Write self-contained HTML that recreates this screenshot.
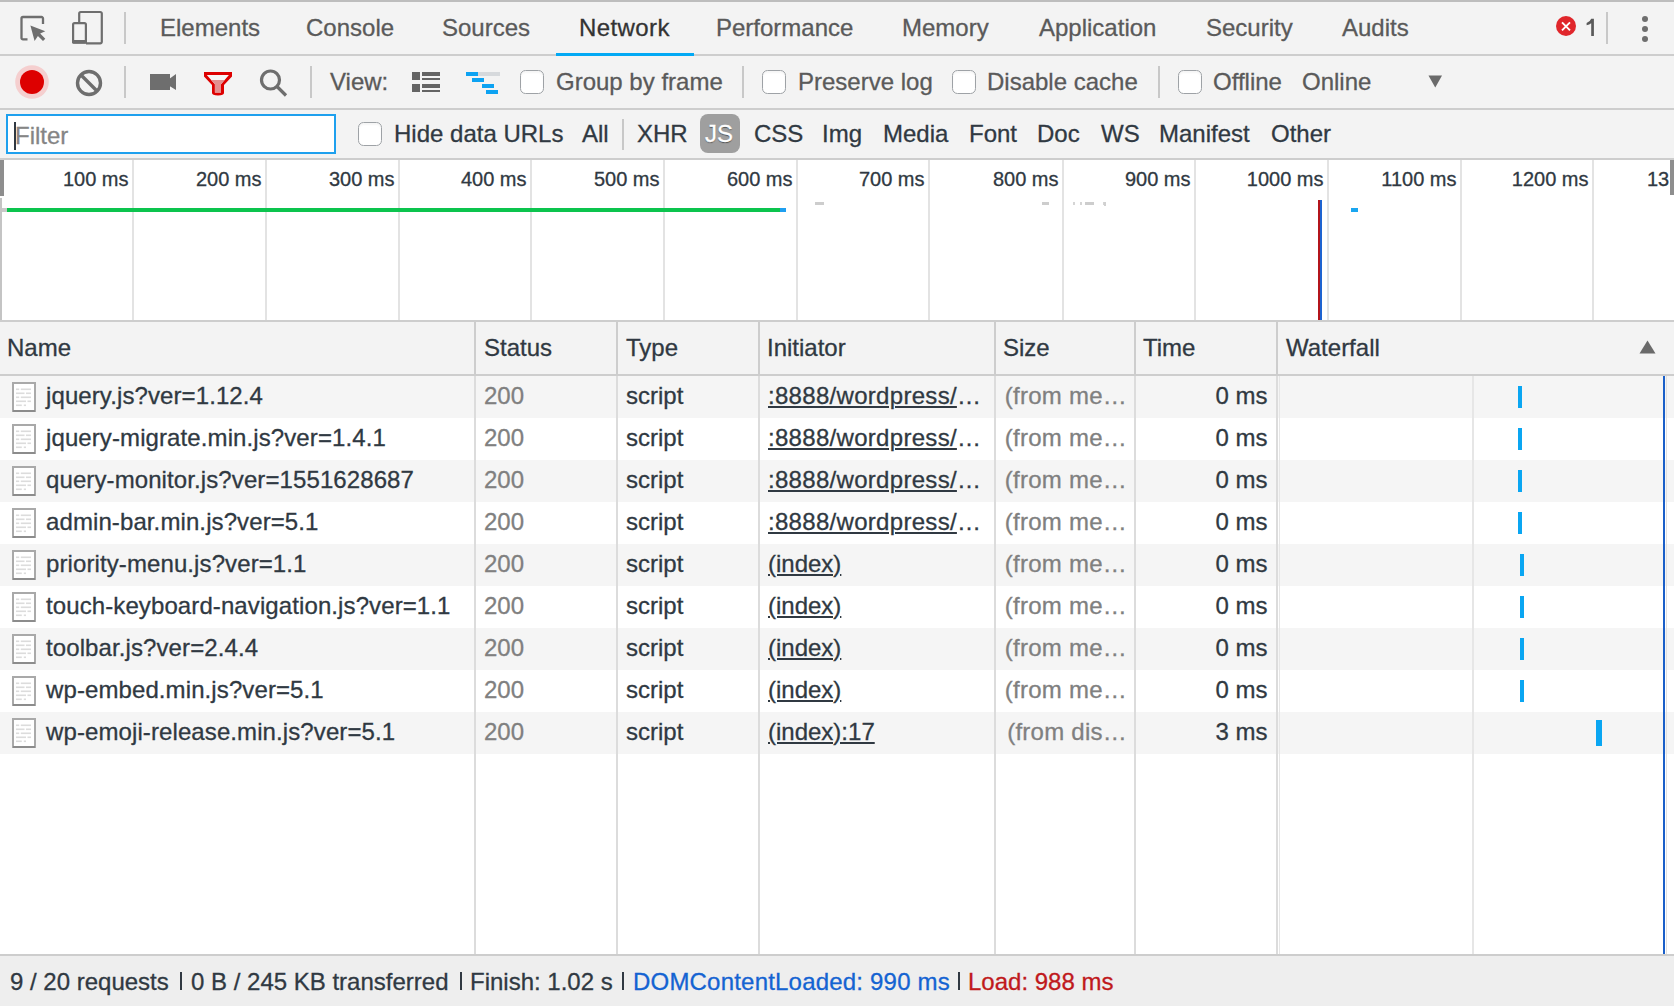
<!DOCTYPE html>
<html><head><meta charset="utf-8"><style>
html,body{margin:0;padding:0;width:1674px;height:1006px;overflow:hidden;background:#fff;}
body{position:relative;font-family:"Liberation Sans", sans-serif;font-size:24px;}
.t{position:absolute;white-space:pre;line-height:28px;font-size:24px;-webkit-text-stroke:0.3px currentColor;}
.r{position:absolute;}
svg{position:absolute;overflow:visible;}
</style></head><body>
<div class="r" style="left:0px;top:0px;width:1674px;height:160px;background:#f3f3f3;"></div>
<div class="r" style="left:0px;top:0px;width:1674px;height:2px;background:#bdbdbd;"></div>
<div class="r" style="left:0px;top:54px;width:1674px;height:2px;background:#cdcdcd;"></div>
<div class="r" style="left:0px;top:108px;width:1674px;height:2px;background:#cdcdcd;"></div>
<div class="r" style="left:0px;top:158px;width:1674px;height:2px;background:#cdcdcd;"></div>
<div class="r" style="left:0px;top:160px;width:1674px;height:160px;background:#ffffff;"></div>
<div class="r" style="left:0px;top:320px;width:1674px;height:2px;background:#cdcdcd;"></div>
<div class="r" style="left:0px;top:322px;width:1674px;height:52px;background:#f3f3f3;"></div>
<div class="r" style="left:0px;top:374px;width:1674px;height:2px;background:#cdcdcd;"></div>
<div class="r" style="left:0px;top:376px;width:1674px;height:578px;background:#ffffff;"></div>
<div class="r" style="left:0px;top:954px;width:1674px;height:2px;background:#cdcdcd;"></div>
<div class="r" style="left:0px;top:956px;width:1674px;height:50px;background:#eeeeee;"></div>
<svg style="left:18px;top:14px" width="32" height="32" viewBox="0 0 32 32"><path d="M9.5 25.4 H5 a1.5 1.5 0 0 1 -1.5 -1.5 V4.5 a1.5 1.5 0 0 1 1.5 -1.5 H23.5 a1.5 1.5 0 0 1 1.5 1.5 V10" fill="none" stroke="#6e6e6e" stroke-width="2.3"/><path d="M12.4 11.6 L27.3 17.2 L22.2 19.6 L27.3 24.7 L25 27 L19.9 21.9 L16.6 27.1 Z" fill="#6e6e6e"/></svg>
<svg style="left:70px;top:10px" width="36" height="36" viewBox="0 0 36 36"><path d="M9.2 12 V3.5 a1.5 1.5 0 0 1 1.5 -1.5 H30.3 a1.5 1.5 0 0 1 1.5 1.5 V31.8 a1.5 1.5 0 0 1 -1.5 1.5 H16" fill="none" stroke="#6e6e6e" stroke-width="2.2"/><rect x="3.1" y="13.1" width="12.8" height="19.6" rx="1.5" fill="none" stroke="#6e6e6e" stroke-width="2.2"/><rect x="2" y="30" width="15" height="3.5" rx="1" fill="#6e6e6e"/></svg>
<div class="r" style="left:124px;top:12px;width:2px;height:32px;background:#c8c8c8;"></div>
<div class="t" style="left:160px;top:14px;color:#5a5a5a;">Elements</div>
<div class="t" style="left:306px;top:14px;color:#5a5a5a;">Console</div>
<div class="t" style="left:442px;top:14px;color:#5a5a5a;">Sources</div>
<div class="t" style="left:579px;top:14px;color:#333333;letter-spacing:0.4px;">Network</div>
<div class="t" style="left:716px;top:14px;color:#5a5a5a;">Performance</div>
<div class="t" style="left:902px;top:14px;color:#5a5a5a;">Memory</div>
<div class="t" style="left:1039px;top:14px;color:#5a5a5a;">Application</div>
<div class="t" style="left:1206px;top:14px;color:#5a5a5a;">Security</div>
<div class="t" style="left:1342px;top:14px;color:#5a5a5a;">Audits</div>
<div class="r" style="left:556px;top:53px;width:138px;height:3px;background:#03a9f4;"></div>
<svg style="left:1554px;top:14px" width="24" height="24" viewBox="0 0 24 24"><circle cx="12" cy="12" r="10" fill="#e0262b"/><path d="M8 8.3 L16 16.3 M16 8.3 L8 16.3" stroke="#fff" stroke-width="1.9"/></svg>
<svg style="left:1584px;top:16px" width="14" height="22" viewBox="0 0 14 22"><path d="M7.2 2.8 H9.9 V20 H7.2 V7.2 Q5.5 8.6 2.6 9.3 V6.9 Q6 6 7.2 2.8 Z" fill="#5a5a5a"/></svg>
<div class="r" style="left:1606px;top:12px;width:2px;height:32px;background:#c8c8c8;"></div>
<div class="r" style="left:1642px;top:16px;width:6px;height:6px;background:#6e6e6e;border-radius:50%;"></div>
<div class="r" style="left:1642px;top:26px;width:6px;height:6px;background:#6e6e6e;border-radius:50%;"></div>
<div class="r" style="left:1642px;top:36px;width:6px;height:6px;background:#6e6e6e;border-radius:50%;"></div>
<svg style="left:14px;top:64px" width="36" height="36" viewBox="0 0 36 36"><circle cx="18" cy="18" r="16.8" fill="#f5cfcf"/><circle cx="18" cy="18" r="12" fill="#dd0000"/></svg>
<svg style="left:74px;top:68px" width="30" height="30" viewBox="0 0 30 30"><circle cx="15" cy="15" r="11.5" fill="none" stroke="#6e6e6e" stroke-width="3.4"/><path d="M7 7 L23 23" stroke="#6e6e6e" stroke-width="3.4"/></svg>
<div class="r" style="left:124px;top:66px;width:2px;height:32px;background:#c8c8c8;"></div>
<svg style="left:148px;top:72px" width="32" height="20" viewBox="0 0 32 20"><rect x="2" y="2" width="20" height="16" fill="#6e6e6e"/><path d="M21.5 6.7 L28 2 V18 L21.5 13.9 Z" fill="#6e6e6e"/></svg>
<svg style="left:200px;top:68px" width="36" height="32" viewBox="0 0 36 32"><path d="M4 4 H32 V8.6 L24 17 V25 Q24 27.4 18 27.4 Q12 27.4 12 25 V17 L4 8.6 Z" fill="#dd0000"/><path d="M6.8 7 H28.9 L21 16.3 V24.6 H14.9 V16.3 Z" fill="#f6f6f6"/><path d="M11.2 12.1 H24.6 L21 16.3 V24.6 H14.9 V16.3 Z" fill="#e38f8f"/></svg>
<svg style="left:256px;top:66px" width="36" height="36" viewBox="0 0 36 36"><circle cx="14.5" cy="14" r="9" fill="none" stroke="#6e6e6e" stroke-width="3.2"/><path d="M21 20.5 L30 29.5" stroke="#6e6e6e" stroke-width="3.2"/></svg>
<div class="r" style="left:310px;top:66px;width:2px;height:32px;background:#c8c8c8;"></div>
<div class="t" style="left:330px;top:68px;color:#5a5a5a;">View:</div>
<div class="r" style="left:412px;top:72px;width:8px;height:8px;background:#646464;"></div>
<div class="r" style="left:412px;top:84px;width:8px;height:8px;background:#646464;"></div>
<div class="r" style="left:422px;top:72px;width:18px;height:4px;background:#646464;"></div>
<div class="r" style="left:422px;top:78px;width:18px;height:2px;background:#646464;"></div>
<div class="r" style="left:422px;top:84px;width:18px;height:4px;background:#646464;"></div>
<div class="r" style="left:422px;top:90px;width:18px;height:2px;background:#646464;"></div>
<div class="r" style="left:466px;top:72px;width:12px;height:4px;background:#0ca2f2;"></div>
<div class="r" style="left:478px;top:72px;width:22px;height:4px;background:#d6d9dc;"></div>
<div class="r" style="left:472px;top:78px;width:12px;height:4px;background:#0ca2f2;"></div>
<div class="r" style="left:482px;top:84px;width:12px;height:4px;background:#0ca2f2;"></div>
<div class="r" style="left:486px;top:90px;width:12px;height:4px;background:#0ca2f2;"></div>
<div class="r" style="left:520px;top:70px;width:24px;height:24px;background:#ffffff;box-sizing:border-box;border:1.5px solid #9ea2a6;border-radius:5.5px;box-shadow:inset 0 2px 2px rgba(0,0,0,0.04);"></div>
<div class="t" style="left:556px;top:68px;color:#5a5a5a;">Group by frame</div>
<div class="r" style="left:742px;top:66px;width:2px;height:32px;background:#c8c8c8;"></div>
<div class="r" style="left:762px;top:70px;width:24px;height:24px;background:#ffffff;box-sizing:border-box;border:1.5px solid #9ea2a6;border-radius:5.5px;box-shadow:inset 0 2px 2px rgba(0,0,0,0.04);"></div>
<div class="t" style="left:798px;top:68px;color:#5a5a5a;">Preserve log</div>
<div class="r" style="left:952px;top:70px;width:24px;height:24px;background:#ffffff;box-sizing:border-box;border:1.5px solid #9ea2a6;border-radius:5.5px;box-shadow:inset 0 2px 2px rgba(0,0,0,0.04);"></div>
<div class="t" style="left:987px;top:68px;color:#5a5a5a;">Disable cache</div>
<div class="r" style="left:1158px;top:66px;width:2px;height:32px;background:#c8c8c8;"></div>
<div class="r" style="left:1178px;top:70px;width:24px;height:24px;background:#ffffff;box-sizing:border-box;border:1.5px solid #9ea2a6;border-radius:5.5px;box-shadow:inset 0 2px 2px rgba(0,0,0,0.04);"></div>
<div class="t" style="left:1213px;top:68px;color:#5a5a5a;">Offline</div>
<div class="t" style="left:1302px;top:68px;color:#5a5a5a;">Online</div>
<svg style="left:1428px;top:75px" width="15" height="13" viewBox="0 0 15 13"><path d="M0.5 0.5 H14 L7.25 12.5 Z" fill="#6a6a6a"/></svg>
<div class="r" style="left:6px;top:114px;width:330px;height:40px;background:#ffffff;box-sizing:border-box;border:2px solid #1ea0ee;"></div>
<div class="r" style="left:14px;top:122px;width:2px;height:28px;background:#303942;"></div>
<div class="t" style="left:15px;top:121.5px;color:#858585;">Filter</div>
<div class="r" style="left:358px;top:122px;width:24px;height:24px;background:#ffffff;box-sizing:border-box;border:1.5px solid #9ea2a6;border-radius:5.5px;box-shadow:inset 0 2px 2px rgba(0,0,0,0.04);"></div>
<div class="t" style="left:394px;top:120px;color:#303942;">Hide data URLs</div>
<div class="t" style="left:582px;top:120px;color:#303942;">All</div>
<div class="t" style="left:637px;top:120px;color:#303942;">XHR</div>
<div class="t" style="left:754px;top:120px;color:#303942;">CSS</div>
<div class="t" style="left:822px;top:120px;color:#303942;">Img</div>
<div class="t" style="left:883px;top:120px;color:#303942;">Media</div>
<div class="t" style="left:969px;top:120px;color:#303942;">Font</div>
<div class="t" style="left:1037px;top:120px;color:#303942;">Doc</div>
<div class="t" style="left:1101px;top:120px;color:#303942;">WS</div>
<div class="t" style="left:1159px;top:120px;color:#303942;">Manifest</div>
<div class="t" style="left:1271px;top:120px;color:#303942;">Other</div>
<div class="r" style="left:622px;top:119px;width:2px;height:31px;background:#c8c8c8;"></div>
<div class="r" style="left:700px;top:114px;width:40px;height:39px;background:#9f9f9f;border-radius:8px;"></div>
<div class="t" style="left:705px;top:120px;color:#ffffff;text-shadow:0 1px 1px rgba(0,0,0,0.5);">JS</div>
<div class="r" style="left:132px;top:160px;width:2px;height:160px;background:#e3e3e3;"></div>
<div class="r" style="left:265px;top:160px;width:2px;height:160px;background:#e3e3e3;"></div>
<div class="r" style="left:398px;top:160px;width:2px;height:160px;background:#e3e3e3;"></div>
<div class="r" style="left:530px;top:160px;width:2px;height:160px;background:#e3e3e3;"></div>
<div class="r" style="left:663px;top:160px;width:2px;height:160px;background:#e3e3e3;"></div>
<div class="r" style="left:796px;top:160px;width:2px;height:160px;background:#e3e3e3;"></div>
<div class="r" style="left:928px;top:160px;width:2px;height:160px;background:#e3e3e3;"></div>
<div class="r" style="left:1062px;top:160px;width:2px;height:160px;background:#e3e3e3;"></div>
<div class="r" style="left:1194px;top:160px;width:2px;height:160px;background:#e3e3e3;"></div>
<div class="r" style="left:1327px;top:160px;width:2px;height:160px;background:#e3e3e3;"></div>
<div class="r" style="left:1460px;top:160px;width:2px;height:160px;background:#e3e3e3;"></div>
<div class="r" style="left:1592px;top:160px;width:2px;height:160px;background:#e3e3e3;"></div>
<div class="t" style="right:1545.5px;top:165px;color:#303942;font-size:20px">100 ms</div>
<div class="t" style="right:1412.5px;top:165px;color:#303942;font-size:20px">200 ms</div>
<div class="t" style="right:1279.5px;top:165px;color:#303942;font-size:20px">300 ms</div>
<div class="t" style="right:1147.5px;top:165px;color:#303942;font-size:20px">400 ms</div>
<div class="t" style="right:1014.5px;top:165px;color:#303942;font-size:20px">500 ms</div>
<div class="t" style="right:881.5px;top:165px;color:#303942;font-size:20px">600 ms</div>
<div class="t" style="right:749.5px;top:165px;color:#303942;font-size:20px">700 ms</div>
<div class="t" style="right:615.5px;top:165px;color:#303942;font-size:20px">800 ms</div>
<div class="t" style="right:483.5px;top:165px;color:#303942;font-size:20px">900 ms</div>
<div class="t" style="right:350.5px;top:165px;color:#303942;font-size:20px">1000 ms</div>
<div class="t" style="right:217.5px;top:165px;color:#303942;font-size:20px">1100 ms</div>
<div class="t" style="right:85.5px;top:165px;color:#303942;font-size:20px">1200 ms</div>
<div class="t" style="left:1647px;top:165px;color:#303942;font-size:20px">13</div>
<div class="r" style="left:0px;top:160px;width:4px;height:36px;background:#8e8e8e;"></div>
<div class="r" style="left:0px;top:198px;width:2px;height:122px;background:#c4c4c4;"></div>
<div class="r" style="left:1670px;top:160px;width:4px;height:35px;background:#8e8e8e;"></div>
<div class="r" style="left:2px;top:208px;width:5px;height:4px;background:#c9c9c9;"></div>
<div class="r" style="left:7px;top:208px;width:773px;height:4px;background:#0cc44e;"></div>
<div class="r" style="left:780px;top:208px;width:6px;height:4px;background:#1f9ff0;"></div>
<div class="r" style="left:815px;top:202px;width:9px;height:3px;background:#cdcdcd;"></div>
<div class="r" style="left:1042px;top:202px;width:7px;height:3px;background:#cdcdcd;"></div>
<div class="r" style="left:1073px;top:202px;width:2px;height:3px;background:#d5d5d5;"></div>
<div class="r" style="left:1080px;top:202px;width:2px;height:3px;background:#d5d5d5;"></div>
<div class="r" style="left:1085px;top:202px;width:9px;height:3px;background:#cdcdcd;"></div>
<div class="r" style="left:1103px;top:202px;width:2px;height:3px;background:#d5d5d5;"></div>
<div class="r" style="left:1104px;top:202px;width:2px;height:4px;background:#d0d0d0;"></div>
<div class="r" style="left:1318px;top:200px;width:2px;height:120px;background:#b3141b;"></div>
<div class="r" style="left:1320px;top:200px;width:2px;height:120px;background:#1e63d0;"></div>
<div class="r" style="left:1351px;top:208px;width:7px;height:4px;background:#1aa6f0;"></div>
<div class="t" style="left:7px;top:334px;color:#303942;">Name</div>
<div class="t" style="left:484px;top:334px;color:#303942;">Status</div>
<div class="t" style="left:626px;top:334px;color:#303942;">Type</div>
<div class="t" style="left:767px;top:334px;color:#303942;">Initiator</div>
<div class="t" style="left:1003px;top:334px;color:#303942;">Size</div>
<div class="t" style="left:1143px;top:334px;color:#303942;">Time</div>
<div class="t" style="left:1286px;top:334px;color:#303942;">Waterfall</div>
<svg style="left:1639px;top:340px" width="18" height="14" viewBox="0 0 18 14"><path d="M0.5 13.5 L8.5 0.5 L16.5 13.5 Z" fill="#6a6a6a"/></svg>
<div class="r" style="left:474px;top:322px;width:2px;height:52px;background:#cdcdcd;"></div>
<div class="r" style="left:616px;top:322px;width:2px;height:52px;background:#cdcdcd;"></div>
<div class="r" style="left:758px;top:322px;width:2px;height:52px;background:#cdcdcd;"></div>
<div class="r" style="left:994px;top:322px;width:2px;height:52px;background:#cdcdcd;"></div>
<div class="r" style="left:1134px;top:322px;width:2px;height:52px;background:#cdcdcd;"></div>
<div class="r" style="left:1276px;top:322px;width:2px;height:52px;background:#cdcdcd;"></div>
<div class="r" style="left:0px;top:376px;width:1674px;height:42px;background:#f5f5f5;"></div>
<svg style="left:12px;top:382px" width="24" height="30" viewBox="0 0 24 30"><rect x="1" y="1" width="22" height="28" fill="#fff" stroke="#a9a9a9" stroke-width="2"/><path d="M1 29 H23" stroke="#8c8c8c" stroke-width="2"/><g fill="#dcdcdc"><rect x="4" y="6.5" width="3.2" height="1.6"/><rect x="8.8" y="6.5" width="10.2" height="1.6"/><rect x="4" y="10.5" width="8.5" height="1.6"/><rect x="14" y="10.5" width="5" height="1.6"/><rect x="4" y="14.5" width="3.2" height="1.6"/><rect x="8.8" y="14.5" width="10.2" height="1.6"/><rect x="4" y="18.5" width="10" height="1.6"/><rect x="15.5" y="18.5" width="3.5" height="1.6"/><rect x="4" y="22.5" width="5.8" height="1.6"/><rect x="11.8" y="22.5" width="2.2" height="1.6"/></g></svg>
<div class="t" style="left:46px;top:382px;color:#303942;letter-spacing:0.1px;">jquery.js?ver=1.12.4</div>
<div class="t" style="left:484px;top:382px;color:#808080;">200</div>
<div class="t" style="left:626px;top:382px;color:#303942;">script</div>
<div class="t" style="left:768px;top:382px;color:#303942"><span style="text-decoration:underline;text-decoration-thickness:1.8px;text-underline-offset:1.5px;letter-spacing:0.3px">:8888/wordpress/</span><span style="letter-spacing:-1px">…</span></div>
<div class="t" style="right:547px;top:382px;color:#808080;letter-spacing:0.25px;">(from me…</div>
<div class="t" style="right:406.5px;top:382px;color:#303942;">0 ms</div>
<div class="r" style="left:1518px;top:386px;width:4px;height:22px;background:#0aa6f2;"></div>
<svg style="left:12px;top:424px" width="24" height="30" viewBox="0 0 24 30"><rect x="1" y="1" width="22" height="28" fill="#fff" stroke="#a9a9a9" stroke-width="2"/><path d="M1 29 H23" stroke="#8c8c8c" stroke-width="2"/><g fill="#dcdcdc"><rect x="4" y="6.5" width="3.2" height="1.6"/><rect x="8.8" y="6.5" width="10.2" height="1.6"/><rect x="4" y="10.5" width="8.5" height="1.6"/><rect x="14" y="10.5" width="5" height="1.6"/><rect x="4" y="14.5" width="3.2" height="1.6"/><rect x="8.8" y="14.5" width="10.2" height="1.6"/><rect x="4" y="18.5" width="10" height="1.6"/><rect x="15.5" y="18.5" width="3.5" height="1.6"/><rect x="4" y="22.5" width="5.8" height="1.6"/><rect x="11.8" y="22.5" width="2.2" height="1.6"/></g></svg>
<div class="t" style="left:46px;top:424px;color:#303942;letter-spacing:0.1px;">jquery-migrate.min.js?ver=1.4.1</div>
<div class="t" style="left:484px;top:424px;color:#808080;">200</div>
<div class="t" style="left:626px;top:424px;color:#303942;">script</div>
<div class="t" style="left:768px;top:424px;color:#303942"><span style="text-decoration:underline;text-decoration-thickness:1.8px;text-underline-offset:1.5px;letter-spacing:0.3px">:8888/wordpress/</span><span style="letter-spacing:-1px">…</span></div>
<div class="t" style="right:547px;top:424px;color:#808080;letter-spacing:0.25px;">(from me…</div>
<div class="t" style="right:406.5px;top:424px;color:#303942;">0 ms</div>
<div class="r" style="left:1518px;top:428px;width:4px;height:22px;background:#0aa6f2;"></div>
<div class="r" style="left:0px;top:460px;width:1674px;height:42px;background:#f5f5f5;"></div>
<svg style="left:12px;top:466px" width="24" height="30" viewBox="0 0 24 30"><rect x="1" y="1" width="22" height="28" fill="#fff" stroke="#a9a9a9" stroke-width="2"/><path d="M1 29 H23" stroke="#8c8c8c" stroke-width="2"/><g fill="#dcdcdc"><rect x="4" y="6.5" width="3.2" height="1.6"/><rect x="8.8" y="6.5" width="10.2" height="1.6"/><rect x="4" y="10.5" width="8.5" height="1.6"/><rect x="14" y="10.5" width="5" height="1.6"/><rect x="4" y="14.5" width="3.2" height="1.6"/><rect x="8.8" y="14.5" width="10.2" height="1.6"/><rect x="4" y="18.5" width="10" height="1.6"/><rect x="15.5" y="18.5" width="3.5" height="1.6"/><rect x="4" y="22.5" width="5.8" height="1.6"/><rect x="11.8" y="22.5" width="2.2" height="1.6"/></g></svg>
<div class="t" style="left:46px;top:466px;color:#303942;letter-spacing:0.1px;">query-monitor.js?ver=1551628687</div>
<div class="t" style="left:484px;top:466px;color:#808080;">200</div>
<div class="t" style="left:626px;top:466px;color:#303942;">script</div>
<div class="t" style="left:768px;top:466px;color:#303942"><span style="text-decoration:underline;text-decoration-thickness:1.8px;text-underline-offset:1.5px;letter-spacing:0.3px">:8888/wordpress/</span><span style="letter-spacing:-1px">…</span></div>
<div class="t" style="right:547px;top:466px;color:#808080;letter-spacing:0.25px;">(from me…</div>
<div class="t" style="right:406.5px;top:466px;color:#303942;">0 ms</div>
<div class="r" style="left:1518px;top:470px;width:4px;height:22px;background:#0aa6f2;"></div>
<svg style="left:12px;top:508px" width="24" height="30" viewBox="0 0 24 30"><rect x="1" y="1" width="22" height="28" fill="#fff" stroke="#a9a9a9" stroke-width="2"/><path d="M1 29 H23" stroke="#8c8c8c" stroke-width="2"/><g fill="#dcdcdc"><rect x="4" y="6.5" width="3.2" height="1.6"/><rect x="8.8" y="6.5" width="10.2" height="1.6"/><rect x="4" y="10.5" width="8.5" height="1.6"/><rect x="14" y="10.5" width="5" height="1.6"/><rect x="4" y="14.5" width="3.2" height="1.6"/><rect x="8.8" y="14.5" width="10.2" height="1.6"/><rect x="4" y="18.5" width="10" height="1.6"/><rect x="15.5" y="18.5" width="3.5" height="1.6"/><rect x="4" y="22.5" width="5.8" height="1.6"/><rect x="11.8" y="22.5" width="2.2" height="1.6"/></g></svg>
<div class="t" style="left:46px;top:508px;color:#303942;letter-spacing:0.1px;">admin-bar.min.js?ver=5.1</div>
<div class="t" style="left:484px;top:508px;color:#808080;">200</div>
<div class="t" style="left:626px;top:508px;color:#303942;">script</div>
<div class="t" style="left:768px;top:508px;color:#303942"><span style="text-decoration:underline;text-decoration-thickness:1.8px;text-underline-offset:1.5px;letter-spacing:0.3px">:8888/wordpress/</span><span style="letter-spacing:-1px">…</span></div>
<div class="t" style="right:547px;top:508px;color:#808080;letter-spacing:0.25px;">(from me…</div>
<div class="t" style="right:406.5px;top:508px;color:#303942;">0 ms</div>
<div class="r" style="left:1518px;top:512px;width:4px;height:22px;background:#0aa6f2;"></div>
<div class="r" style="left:0px;top:544px;width:1674px;height:42px;background:#f5f5f5;"></div>
<svg style="left:12px;top:550px" width="24" height="30" viewBox="0 0 24 30"><rect x="1" y="1" width="22" height="28" fill="#fff" stroke="#a9a9a9" stroke-width="2"/><path d="M1 29 H23" stroke="#8c8c8c" stroke-width="2"/><g fill="#dcdcdc"><rect x="4" y="6.5" width="3.2" height="1.6"/><rect x="8.8" y="6.5" width="10.2" height="1.6"/><rect x="4" y="10.5" width="8.5" height="1.6"/><rect x="14" y="10.5" width="5" height="1.6"/><rect x="4" y="14.5" width="3.2" height="1.6"/><rect x="8.8" y="14.5" width="10.2" height="1.6"/><rect x="4" y="18.5" width="10" height="1.6"/><rect x="15.5" y="18.5" width="3.5" height="1.6"/><rect x="4" y="22.5" width="5.8" height="1.6"/><rect x="11.8" y="22.5" width="2.2" height="1.6"/></g></svg>
<div class="t" style="left:46px;top:550px;color:#303942;letter-spacing:0.1px;">priority-menu.js?ver=1.1</div>
<div class="t" style="left:484px;top:550px;color:#808080;">200</div>
<div class="t" style="left:626px;top:550px;color:#303942;">script</div>
<div class="t" style="left:768px;top:550px;color:#303942"><span style="text-decoration:underline;text-decoration-thickness:1.8px;text-underline-offset:1.5px">(index)</span></div>
<div class="t" style="right:547px;top:550px;color:#808080;letter-spacing:0.25px;">(from me…</div>
<div class="t" style="right:406.5px;top:550px;color:#303942;">0 ms</div>
<div class="r" style="left:1520px;top:554px;width:4px;height:22px;background:#0aa6f2;"></div>
<svg style="left:12px;top:592px" width="24" height="30" viewBox="0 0 24 30"><rect x="1" y="1" width="22" height="28" fill="#fff" stroke="#a9a9a9" stroke-width="2"/><path d="M1 29 H23" stroke="#8c8c8c" stroke-width="2"/><g fill="#dcdcdc"><rect x="4" y="6.5" width="3.2" height="1.6"/><rect x="8.8" y="6.5" width="10.2" height="1.6"/><rect x="4" y="10.5" width="8.5" height="1.6"/><rect x="14" y="10.5" width="5" height="1.6"/><rect x="4" y="14.5" width="3.2" height="1.6"/><rect x="8.8" y="14.5" width="10.2" height="1.6"/><rect x="4" y="18.5" width="10" height="1.6"/><rect x="15.5" y="18.5" width="3.5" height="1.6"/><rect x="4" y="22.5" width="5.8" height="1.6"/><rect x="11.8" y="22.5" width="2.2" height="1.6"/></g></svg>
<div class="t" style="left:46px;top:592px;color:#303942;letter-spacing:0.1px;">touch-keyboard-navigation.js?ver=1.1</div>
<div class="t" style="left:484px;top:592px;color:#808080;">200</div>
<div class="t" style="left:626px;top:592px;color:#303942;">script</div>
<div class="t" style="left:768px;top:592px;color:#303942"><span style="text-decoration:underline;text-decoration-thickness:1.8px;text-underline-offset:1.5px">(index)</span></div>
<div class="t" style="right:547px;top:592px;color:#808080;letter-spacing:0.25px;">(from me…</div>
<div class="t" style="right:406.5px;top:592px;color:#303942;">0 ms</div>
<div class="r" style="left:1520px;top:596px;width:4px;height:22px;background:#0aa6f2;"></div>
<div class="r" style="left:0px;top:628px;width:1674px;height:42px;background:#f5f5f5;"></div>
<svg style="left:12px;top:634px" width="24" height="30" viewBox="0 0 24 30"><rect x="1" y="1" width="22" height="28" fill="#fff" stroke="#a9a9a9" stroke-width="2"/><path d="M1 29 H23" stroke="#8c8c8c" stroke-width="2"/><g fill="#dcdcdc"><rect x="4" y="6.5" width="3.2" height="1.6"/><rect x="8.8" y="6.5" width="10.2" height="1.6"/><rect x="4" y="10.5" width="8.5" height="1.6"/><rect x="14" y="10.5" width="5" height="1.6"/><rect x="4" y="14.5" width="3.2" height="1.6"/><rect x="8.8" y="14.5" width="10.2" height="1.6"/><rect x="4" y="18.5" width="10" height="1.6"/><rect x="15.5" y="18.5" width="3.5" height="1.6"/><rect x="4" y="22.5" width="5.8" height="1.6"/><rect x="11.8" y="22.5" width="2.2" height="1.6"/></g></svg>
<div class="t" style="left:46px;top:634px;color:#303942;letter-spacing:0.1px;">toolbar.js?ver=2.4.4</div>
<div class="t" style="left:484px;top:634px;color:#808080;">200</div>
<div class="t" style="left:626px;top:634px;color:#303942;">script</div>
<div class="t" style="left:768px;top:634px;color:#303942"><span style="text-decoration:underline;text-decoration-thickness:1.8px;text-underline-offset:1.5px">(index)</span></div>
<div class="t" style="right:547px;top:634px;color:#808080;letter-spacing:0.25px;">(from me…</div>
<div class="t" style="right:406.5px;top:634px;color:#303942;">0 ms</div>
<div class="r" style="left:1520px;top:638px;width:4px;height:22px;background:#0aa6f2;"></div>
<svg style="left:12px;top:676px" width="24" height="30" viewBox="0 0 24 30"><rect x="1" y="1" width="22" height="28" fill="#fff" stroke="#a9a9a9" stroke-width="2"/><path d="M1 29 H23" stroke="#8c8c8c" stroke-width="2"/><g fill="#dcdcdc"><rect x="4" y="6.5" width="3.2" height="1.6"/><rect x="8.8" y="6.5" width="10.2" height="1.6"/><rect x="4" y="10.5" width="8.5" height="1.6"/><rect x="14" y="10.5" width="5" height="1.6"/><rect x="4" y="14.5" width="3.2" height="1.6"/><rect x="8.8" y="14.5" width="10.2" height="1.6"/><rect x="4" y="18.5" width="10" height="1.6"/><rect x="15.5" y="18.5" width="3.5" height="1.6"/><rect x="4" y="22.5" width="5.8" height="1.6"/><rect x="11.8" y="22.5" width="2.2" height="1.6"/></g></svg>
<div class="t" style="left:46px;top:676px;color:#303942;letter-spacing:0.1px;">wp-embed.min.js?ver=5.1</div>
<div class="t" style="left:484px;top:676px;color:#808080;">200</div>
<div class="t" style="left:626px;top:676px;color:#303942;">script</div>
<div class="t" style="left:768px;top:676px;color:#303942"><span style="text-decoration:underline;text-decoration-thickness:1.8px;text-underline-offset:1.5px">(index)</span></div>
<div class="t" style="right:547px;top:676px;color:#808080;letter-spacing:0.25px;">(from me…</div>
<div class="t" style="right:406.5px;top:676px;color:#303942;">0 ms</div>
<div class="r" style="left:1520px;top:680px;width:4px;height:22px;background:#0aa6f2;"></div>
<div class="r" style="left:0px;top:712px;width:1674px;height:42px;background:#f5f5f5;"></div>
<svg style="left:12px;top:718px" width="24" height="30" viewBox="0 0 24 30"><rect x="1" y="1" width="22" height="28" fill="#fff" stroke="#a9a9a9" stroke-width="2"/><path d="M1 29 H23" stroke="#8c8c8c" stroke-width="2"/><g fill="#dcdcdc"><rect x="4" y="6.5" width="3.2" height="1.6"/><rect x="8.8" y="6.5" width="10.2" height="1.6"/><rect x="4" y="10.5" width="8.5" height="1.6"/><rect x="14" y="10.5" width="5" height="1.6"/><rect x="4" y="14.5" width="3.2" height="1.6"/><rect x="8.8" y="14.5" width="10.2" height="1.6"/><rect x="4" y="18.5" width="10" height="1.6"/><rect x="15.5" y="18.5" width="3.5" height="1.6"/><rect x="4" y="22.5" width="5.8" height="1.6"/><rect x="11.8" y="22.5" width="2.2" height="1.6"/></g></svg>
<div class="t" style="left:46px;top:718px;color:#303942;letter-spacing:0.1px;">wp-emoji-release.min.js?ver=5.1</div>
<div class="t" style="left:484px;top:718px;color:#808080;">200</div>
<div class="t" style="left:626px;top:718px;color:#303942;">script</div>
<div class="t" style="left:768px;top:718px;color:#303942"><span style="text-decoration:underline;text-decoration-thickness:1.8px;text-underline-offset:1.5px">(index):17</span></div>
<div class="t" style="right:547px;top:718px;color:#808080;letter-spacing:0.25px;">(from dis…</div>
<div class="t" style="right:406.5px;top:718px;color:#303942;">3 ms</div>
<div class="r" style="left:1596px;top:720px;width:6px;height:26px;background:#0aa6f2;"></div>
<div class="r" style="left:474px;top:376px;width:2px;height:578px;background:#dcdcdc;"></div>
<div class="r" style="left:616px;top:376px;width:2px;height:578px;background:#dcdcdc;"></div>
<div class="r" style="left:758px;top:376px;width:2px;height:578px;background:#dcdcdc;"></div>
<div class="r" style="left:994px;top:376px;width:2px;height:578px;background:#dcdcdc;"></div>
<div class="r" style="left:1134px;top:376px;width:2px;height:578px;background:#dcdcdc;"></div>
<div class="r" style="left:1276px;top:376px;width:2px;height:578px;background:#dcdcdc;"></div>
<div class="r" style="left:1279px;top:376px;width:1px;height:578px;background:#e6e6e6;"></div>
<div class="r" style="left:1472px;top:376px;width:2px;height:578px;background:#e6e6e6;"></div>
<div class="r" style="left:1663px;top:376px;width:2px;height:578px;background:#1a5fc9;"></div>
<div class="r" style="left:1666px;top:376px;width:1px;height:578px;background:#e0e0e0;"></div>
<div class="t" style="left:10px;top:968px;color:#303942;">9 / 20 requests</div>
<div class="r" style="left:180px;top:972px;width:2px;height:18px;background:#303942;"></div>
<div class="t" style="left:191px;top:968px;color:#303942;">0 B / 245 KB transferred</div>
<div class="r" style="left:460px;top:972px;width:2px;height:18px;background:#303942;"></div>
<div class="t" style="left:470px;top:968px;color:#303942;">Finish: 1.02 s</div>
<div class="r" style="left:622px;top:972px;width:2px;height:18px;background:#303942;"></div>
<div class="t" style="left:633px;top:968px;color:#1463d2;letter-spacing:0.2px;">DOMContentLoaded: 990 ms</div>
<div class="r" style="left:958px;top:972px;width:2px;height:18px;background:#303942;"></div>
<div class="t" style="left:968px;top:968px;color:#c0191c;">Load: 988 ms</div>
</body></html>
